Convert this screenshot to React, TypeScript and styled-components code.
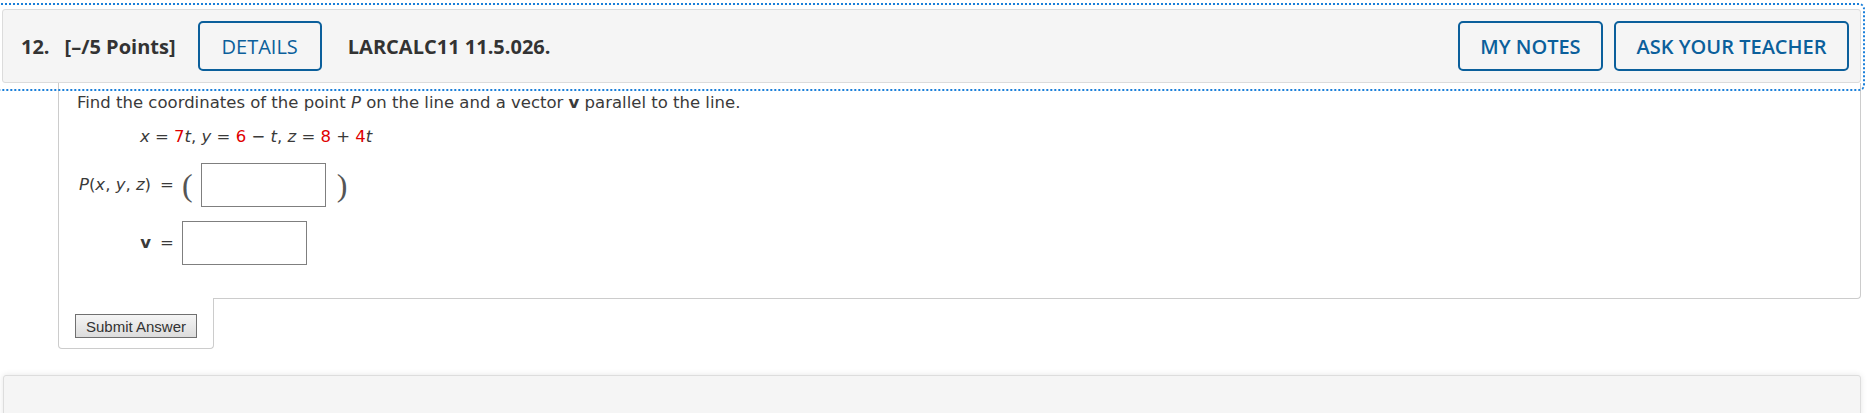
import styled, {createGlobalStyle} from "styled-components";

const GlobalStyle = createGlobalStyle`
    html, body {
        margin: 0;
        padding: 0;
        background: #fff;
        overflow: hidden;
    }

    body {
        font-family: "DejaVu Sans", Verdana, sans-serif;
        color: #333;
    }
`;

const Page = styled.div`
    width: 1859px;
    padding: 9px 0 0 2px;
`;

const QuestionHeader = styled.div`
    position: relative;
    display: flex;
    align-items: center;
    height: 72px;
    padding: 0 11px 0 18px;
    background: #f5f5f5;
    border: 1px solid #dcdcdc;
    border-radius: 3px;
    font-family: "Open Sans", sans-serif;
    color: #333;

    /* keyboard focus ring that wraps the header */
    &::after {
        content: "";
        position: absolute;
        top: -7px;
        bottom: -9px;
        left: -12px;
        right: -5px;
        border: 2px dotted #1a7fd9;
        border-radius: 6px;
        pointer-events: none;
    }
`;

const HeaderText = styled.span<{ $gap?: number; $lead?: number }>`
    font-size: 20px;
    font-weight: 700;
    white-space: nowrap;
    margin-left: ${(p) => p.$lead ?? 0}px;
    margin-right: ${(p) => p.$gap ?? 0}px;
`;

const Spacer = styled.div`
    flex: 1;
`;

const HeaderButtons = styled.div`
    display: flex;
    gap: 11px;
`;

const HeaderButton = styled.button<{ $weight?: number; $pad?: number }>`
    box-sizing: border-box;
    height: 50px;
    padding: 0 ${(p) => p.$pad ?? 22}px;
    background: transparent;
    border: 2px solid #0b5f9b;
    border-radius: 5px;
    color: #0b5f9b;
    font-family: "Open Sans", sans-serif;
    font-size: 20px;
    font-weight: ${(p) => p.$weight ?? 400};
    white-space: nowrap;
    cursor: pointer;
`;

const QuestionBody = styled.div`
    margin-left: 56px;
    padding: 10px 18px 33px;
    border: 1px solid #ccc;
    border-top: none;
    border-radius: 0 0 4px 0;
    font-size: 16.5px;
    line-height: 20px;
    color: #3a3a3a;
`;

const Prompt = styled.p`
    margin: 0;
`;

const Equation = styled.div`
    margin-top: 14px;
    padding-left: 63px;
    white-space: pre;
`;

const Var = styled.i`
    font-style: italic;
`;

const Num = styled.span`
    color: #e00000;
`;

const AnswerGrid = styled.div`
    display: grid;
    grid-template-columns: 74px 12px auto;
    column-gap: 9px;
    row-gap: 14px;
    align-items: center;
    justify-content: start;
    margin-top: 16px;
`;

const AnswerLabel = styled.span`
    justify-self: end;
    white-space: pre;
`;

const Equals = styled.span`
    text-align: center;
`;

const ValueGroup = styled.div`
    display: flex;
    align-items: center;
    margin-left: 1px;
`;

const Paren = styled.span<{ $side: "left" | "right" }>`
    font-family: "Liberation Serif", serif;
    font-size: 32px;
    line-height: 1;
    color: #555;
    margin: ${(p) => (p.$side === "left" ? "0 8px 0 0" : "0 0 0 11px")};
`;

const AnswerInput = styled.input`
    box-sizing: border-box;
    width: 125px;
    height: 44px;
    border: 1px solid #7f7f7f;
    border-radius: 0;
    background: #fff;
    outline: none;
`;

const SubmitTab = styled.div`
    box-sizing: border-box;
    width: 156px;
    margin: -1px 0 0 56px;
    padding: 16px 16px 10px;
    background: #fff;
    border: 1px solid #ccc;
    border-top: none;
    border-radius: 0 0 4px 4px;
`;

const SubmitButton = styled.button`
    display: block;
    box-sizing: border-box;
    width: 122px;
    height: 24px;
    padding: 0;
    border: 1px solid #707070;
    background: linear-gradient(#f5f5f5, #dcdcdc);
    color: #333;
    font-family: "Liberation Sans", Arial, sans-serif;
    font-size: 15px;
    cursor: pointer;
`;

const NextQuestion = styled.div`
    height: 60px;
    margin: 26px 0 0 1px;
    background: #f5f5f5;
    border: 1px solid #ddd;
    border-radius: 3px;
    box-shadow: 0 0 6px rgba(0, 0, 0, 0.1);
`;

export default function App() {
    return (
        <>
            <GlobalStyle/>
            <Page>
                <QuestionHeader>
                    <HeaderText $gap={15}>12.</HeaderText>
                    <HeaderText $gap={22}>[–/5 Points]</HeaderText>
                    <HeaderButton>DETAILS</HeaderButton>
                    <HeaderText $lead={26}>LARCALC11 11.5.026.</HeaderText>
                    <Spacer/>
                    <HeaderButtons>
                        <HeaderButton $weight={600} $pad={20.5}>MY NOTES</HeaderButton>
                        <HeaderButton $weight={600} $pad={20.5}>ASK YOUR TEACHER</HeaderButton>
                    </HeaderButtons>
                </QuestionHeader>

                <QuestionBody>
                    <Prompt>
                        Find the coordinates of the point <Var>P</Var> on the line and a vector <b>v</b> parallel
                        to the line.
                    </Prompt>
                    <Equation>
                        <Var>x</Var> = <Num>7</Num><Var>t</Var>, <Var>y</Var> = <Num>6</Num> − <Var>t</Var>,{" "}
                        <Var>z</Var> = <Num>8</Num> + <Num>4</Num><Var>t</Var>
                    </Equation>
                    <AnswerGrid>
                        <AnswerLabel>
                            <Var>P</Var>(<Var>x</Var>, <Var>y</Var>, <Var>z</Var>)
                        </AnswerLabel>
                        <Equals>=</Equals>
                        <ValueGroup>
                            <Paren $side="left">(</Paren>
                            <AnswerInput/>
                            <Paren $side="right">)</Paren>
                        </ValueGroup>

                        <AnswerLabel>
                            <b>v</b>
                        </AnswerLabel>
                        <Equals>=</Equals>
                        <ValueGroup>
                            <AnswerInput/>
                        </ValueGroup>
                    </AnswerGrid>
                </QuestionBody>

                <SubmitTab>
                    <SubmitButton>Submit Answer</SubmitButton>
                </SubmitTab>

                <NextQuestion/>
            </Page>
        </>
    );
}
